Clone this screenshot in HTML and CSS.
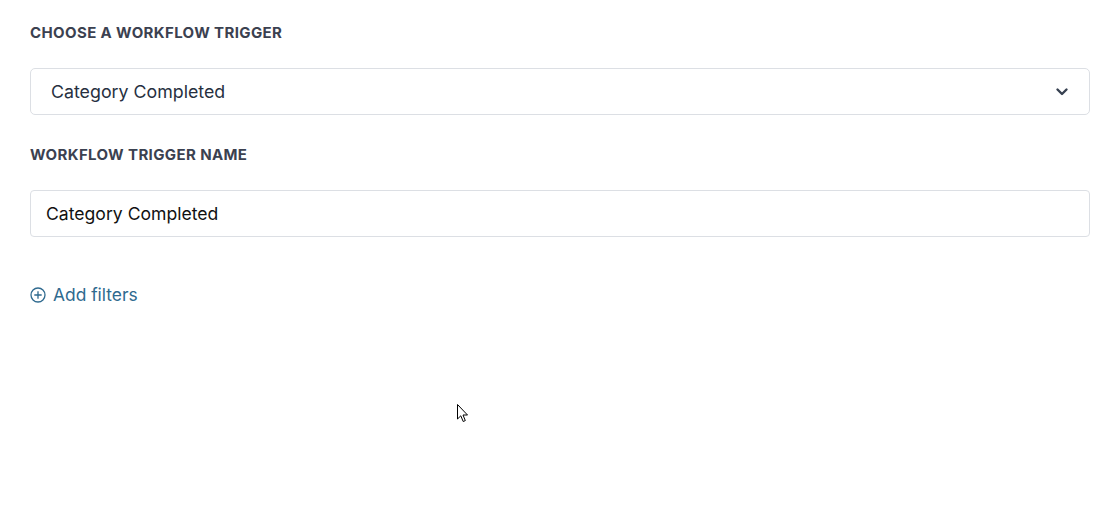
FILE: index.html
```html
<!DOCTYPE html>
<html lang="en">
<head>
    <meta charset="UTF-8">
    <title>Workflow Trigger</title>
    <link rel="stylesheet" href="styles.css">
</head>
<body>
    <div class="form">
        <label class="field-label" for="trigger">Choose a workflow trigger</label>
        <div class="select">
            <span class="select-value">Category Completed</span>
            <svg class="chevron" width="14" height="14" viewBox="0 0 14 14">
                <path d="M2.5 4.5 L7 9 L11.5 4.5" fill="none" stroke="#374151" stroke-width="2.4" stroke-linecap="round" stroke-linejoin="round"/>
            </svg>
        </div>

        <label class="field-label second" for="name">Workflow trigger name</label>
        <input class="text-input" id="name" type="text" value="Category Completed">

        <a class="add-filters" href="#">
            <svg width="16" height="16" viewBox="0 0 16 16">
                <circle cx="8" cy="8" r="7" fill="none" stroke="#2f6a8f" stroke-width="1.3"/>
                <path d="M8 4.3 V11.7 M4.3 8 H11.7" stroke="#2f6a8f" stroke-width="1.3"/>
            </svg>
            Add filters
        </a>
    </div>
    <svg class="cursor" width="14" height="22" viewBox="0 0 14 22">
        <path d="M1.5 1.5 L1.5 16 L4.8 12.8 L7.2 18.5 L9.3 17.6 L7 12 L11.5 12 Z" fill="#fff" stroke="#000" stroke-width="1"/>
    </svg>
</body>
</html>
```

FILE: styles.css
```css
body {
    margin: 0;
    background: #ffffff;
    font-family: Inter, "Noto Sans", sans-serif;
    color: #1f2937;
}
.form {
    padding: 24px 30px 0 30px;
}
.field-label {
    display: block;
    font-size: 15px;
    line-height: 18px;
    font-weight: 700;
    letter-spacing: 0.38px;
    text-transform: uppercase;
    color: #3b4150;
    margin-bottom: 26px;
}
.field-label.second {
    margin-top: 31px;
    margin-bottom: 26px;
}
.select {
    display: flex;
    align-items: center;
    justify-content: space-between;
    height: 47px;
    box-sizing: border-box;
    border: 1px solid #dcdfe4;
    border-radius: 5px;
    padding: 0 20px 0 20px;
}
.select-value {
    font-size: 17.8px;
    color: #27303f;
}
.chevron {
    display: block;
}
.text-input {
    display: block;
    width: 100%;
    height: 47px;
    box-sizing: border-box;
    border: 1px solid #dcdfe4;
    border-radius: 4px;
    padding: 0 15px;
    font-family: inherit;
    font-size: 17.6px;
    color: #111111;
    background: #fff;
    outline: none;
}
.add-filters {
    display: inline-flex;
    align-items: center;
    gap: 7px;
    margin-top: 48px;
    line-height: 20px;
    font-size: 17.4px;
    color: #2f6a8f;
    text-decoration: none;
}
.add-filters svg {
    display: block;
}
.cursor {
    position: absolute;
    left: 456px;
    top: 403px;
}
```
